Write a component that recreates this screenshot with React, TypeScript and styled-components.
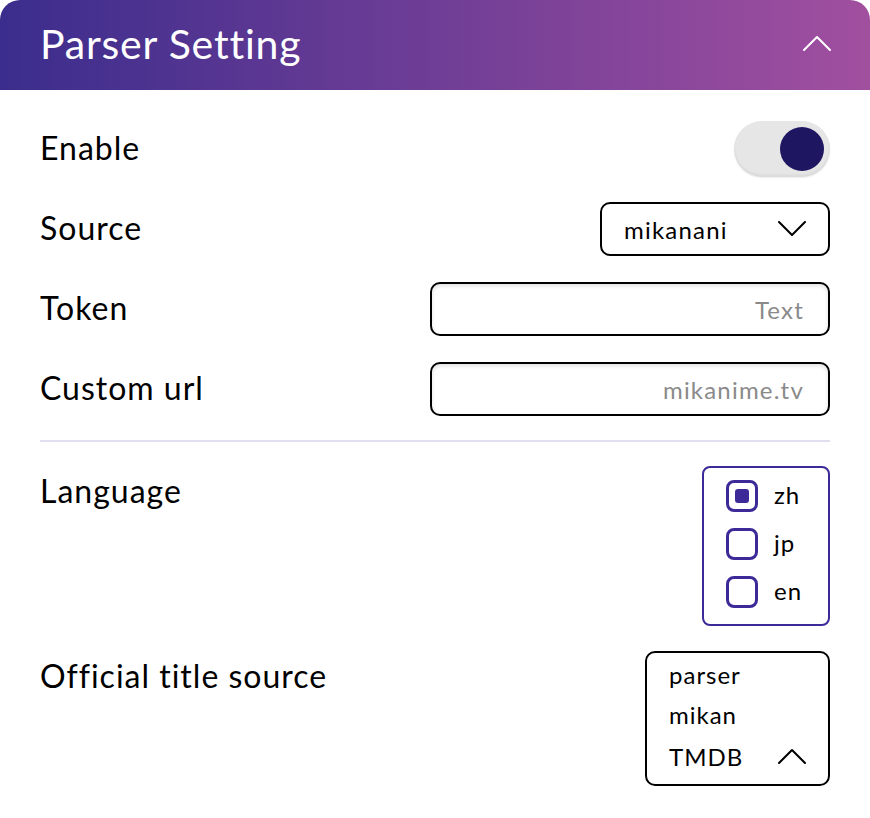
import React, { useState } from "react";
import styled, { createGlobalStyle } from "styled-components";

const GlobalStyle = createGlobalStyle`
  html, body {
    margin: 0;
    padding: 0;
    background: #ffffff;
  }
  body {
    font-family: Lato, "Noto Sans", sans-serif;
    color: #000000;
  }
`;

const Chevron = ({ up, color = "#000", size = 28 }: { up?: boolean; color?: string; size?: number }) => (
  <svg width={size} height={size / 1.75} viewBox="0 0 28 16" fill="none">
    <path
      d={up ? "M1 15 L14 2 L27 15" : "M1 1 L14 14 L27 1"}
      stroke={color}
      strokeWidth="2"
      strokeLinecap="round"
      strokeLinejoin="round"
    />
  </svg>
);

function App() {
  const [enabled, setEnabled] = useState(true);
  const [langs, setLangs] = useState<Record<string, boolean>>({ zh: true, jp: false, en: false });

  return (
    <>
      <GlobalStyle />
      <Card>
        <Header>
          <Title>Parser Setting</Title>
          <Chevron up color="#ffffff" size={28} />
        </Header>
        <Body>
          <Row>
            <Label>Enable</Label>
            <Toggle $on={enabled} onClick={() => setEnabled(!enabled)}>
              <Knob />
            </Toggle>
          </Row>
          <Row>
            <Label>Source</Label>
            <Select>
              <span>mikanani</span>
              <Chevron size={28} />
            </Select>
          </Row>
          <Row>
            <Label>Token</Label>
            <Input placeholder="Text" />
          </Row>
          <Row>
            <Label>Custom url</Label>
            <Input placeholder="mikanime.tv" />
          </Row>
          <Divider />
          <TopRow>
            <Label>Language</Label>
            <CheckGroup>
              {["zh", "jp", "en"].map((l) => (
                <CheckItem key={l} onClick={() => setLangs({ ...langs, [l]: !langs[l] })}>
                  <Box $checked={langs[l]} />
                  <span>{l}</span>
                </CheckItem>
              ))}
            </CheckGroup>
          </TopRow>
          <TopRow>
            <Label>Official title source</Label>
            <ListBox>
              <Option>parser</Option>
              <Option>mikan</Option>
              <LastOption>
                <span>TMDB</span>
                <Chevron up size={28} />
              </LastOption>
            </ListBox>
          </TopRow>
        </Body>
      </Card>
    </>
  );
}

const Card = styled.div`
  width: 870px;
  background: #ffffff;
`;

const Header = styled.div`
  height: 90px;
  border-radius: 20px 20px 0 0;
  background: linear-gradient(90deg, #3b2d8d 0%, #6a3c95 45%, #a14f9f 100%);
  display: flex;
  align-items: center;
  justify-content: space-between;
  padding: 0 39px 0 40px;
  box-sizing: border-box;
  svg {
    margin-top: -4px;
  }
`;

const Title = styled.h1`
  margin: 0;
  color: #ffffff;
  font-weight: 400;
  font-size: 41px;
  letter-spacing: 0.8px;
  margin-top: -4px;
`;

const Body = styled.div`
  padding: 31px 40px 0 40px;
  display: flex;
  flex-direction: column;
`;

const Row = styled.div`
  display: flex;
  align-items: center;
  justify-content: space-between;
  min-height: 56px;
  margin-bottom: 24px;
`;

const TopRow = styled.div`
  display: flex;
  align-items: flex-start;
  justify-content: space-between;
  margin-bottom: 25px;
`;

const Label = styled.div`
  font-size: 32px;
  letter-spacing: 1px;
  line-height: 56px;
  margin-top: -3px;
`;

const Toggle = styled.div<{ $on: boolean }>`
  width: 96px;
  height: 56px;
  border-radius: 28px;
  background: #e6e6e6;
  box-shadow: inset 0 -2px 3px rgba(0, 0, 0, 0.06), 0 1px 2px rgba(0, 0, 0, 0.08);
  display: flex;
  align-items: center;
  justify-content: ${(p) => (p.$on ? "flex-end" : "flex-start")};
  padding: 0 6px;
  box-sizing: border-box;
  cursor: pointer;
`;

const Knob = styled.div`
  width: 44px;
  height: 44px;
  border-radius: 50%;
  background: #1e1660;
`;

const Select = styled.div`
  width: 230px;
  height: 54px;
  box-sizing: border-box;
  border: 2px solid #000;
  border-radius: 10px;
  display: flex;
  align-items: center;
  justify-content: space-between;
  padding: 0 22px 0 22px;
  font-size: 24px;
  letter-spacing: 1.2px;
`;

const Input = styled.input`
  width: 400px;
  height: 54px;
  box-sizing: border-box;
  border: 2px solid #000;
  border-radius: 10px;
  padding: 0 24px;
  text-align: right;
  font-family: Lato, "Noto Sans", sans-serif;
  font-size: 24px;
  letter-spacing: 1.2px;
  outline: none;
  box-shadow: inset 0 2px 4px rgba(0, 0, 0, 0.12);
  &::placeholder {
    color: #8a8a8a;
  }
`;

const Divider = styled.div`
  height: 2px;
  background: #e2def0;
  margin: -1px 0 24px 0;
`;

const CheckGroup = styled.div`
  width: 128px;
  height: 160px;
  box-sizing: border-box;
  border: 2px solid #3d2a98;
  border-radius: 8px;
  padding: 12px 0 0 22px;
  display: flex;
  flex-direction: column;
  gap: 16px;
`;

const CheckItem = styled.div`
  display: flex;
  align-items: center;
  gap: 16px;
  font-size: 24px;
  letter-spacing: 1px;
  height: 32px;
  cursor: pointer;
  span {
    margin-top: -3px;
  }
`;

const Box = styled.div<{ $checked: boolean }>`
  width: 32px;
  height: 32px;
  box-sizing: border-box;
  border: 3px solid #3d2a98;
  border-radius: 8px;
  display: flex;
  align-items: center;
  justify-content: center;
  &::after {
    content: "";
    width: 14px;
    height: 14px;
    border-radius: 3px;
    background: #3d2a98;
    display: ${(p) => (p.$checked ? "block" : "none")};
  }
`;

const ListBox = styled.div`
  width: 185px;
  height: 135px;
  box-sizing: border-box;
  border: 2px solid #000;
  border-radius: 10px;
  padding: 4px 22px 0 22px;
  display: flex;
  flex-direction: column;
  font-size: 24px;
  letter-spacing: 1px;
`;

const Option = styled.div`
  height: 40px;
  line-height: 36px;
`;

const LastOption = styled(Option)`
  display: flex;
  align-items: center;
  justify-content: space-between;
  svg {
    margin-top: -2px;
  }
`;

export default App;
